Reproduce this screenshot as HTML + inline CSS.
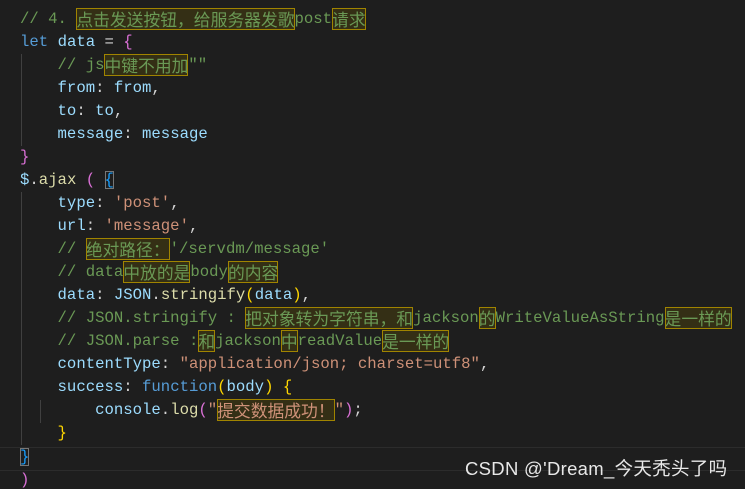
<!DOCTYPE html>
<html><head><meta charset="utf-8"><style>
html,body{margin:0;padding:0;background:#1e1e1e;width:745px;height:489px;overflow:hidden;position:relative}
.l{position:absolute;left:20px;height:23px;line-height:23px;white-space:pre;font-family:"Liberation Mono","Noto Sans CJK SC",monospace;font-size:15.65px;color:#d4d4d4}
.h{display:inline-block;vertical-align:top;height:22px;line-height:22px;font-family:"Noto Sans CJK SC",sans-serif;font-size:16.8px;outline:1px solid #a08400;outline-offset:-1px;background:rgba(110,95,0,.28)}
.cm{color:#6a9955}.k{color:#569cd6}.v{color:#9cdcfe}.s{color:#ce9178}.p{color:#da70d6}.y{color:#ffd700}.f{color:#dcdcaa}.b{color:#179fff}
.g{position:absolute;width:1px;background:#404040}
</style></head><body>
<div class="g" style="left:21px;top:54px;height:92px"></div>
<div class="g" style="left:21px;top:192px;height:253px"></div>
<div class="g" style="left:40px;top:400px;height:23px"></div>
<div style="position:absolute;left:0;top:447px;width:745px;height:22px;border-top:1px solid #2c2c2c;border-bottom:1px solid #2c2c2c"></div>

<div class="l cm" style="top:8px">// 4. <span class="h">点击发送按钮，给服务器发歌</span>post<span class="h">请求</span></div>
<div class="l" style="top:31px"><span class="k">let</span> <span class="v">data</span> = <span class="p">{</span></div>
<div class="l cm" style="top:54px">    // js<span class="h">中键不用加</span>""</div>
<div class="l" style="top:77px"><span class="v">    from</span>: <span class="v">from</span>,</div>
<div class="l" style="top:100px"><span class="v">    to</span>: <span class="v">to</span>,</div>
<div class="l" style="top:123px"><span class="v">    message</span>: <span class="v">message</span></div>
<div class="l" style="top:146px"><span class="p">}</span></div>
<div class="l" style="top:169px"><span class="v">$</span>.<span class="f">ajax</span> <span class="p">(</span> <span class="b" style="outline:1px solid #777;outline-offset:-1px">{</span></div>
<div class="l" style="top:192px"><span class="v">    type</span>: <span class="s">'post'</span>,</div>
<div class="l" style="top:215px"><span class="v">    url</span>: <span class="s">'message'</span>,</div>
<div class="l cm" style="top:238px">    // <span class="h">绝对路径：</span>'/servdm/message'</div>
<div class="l cm" style="top:261px">    // data<span class="h">中放的是</span>body<span class="h">的内容</span></div>
<div class="l" style="top:284px"><span class="v">    data</span>: <span class="v">JSON</span>.<span class="f">stringify</span><span class="y">(</span><span class="v">data</span><span class="y">)</span>,</div>
<div class="l cm" style="top:307px">    // JSON.stringify : <span class="h">把对象转为字符串，和</span>jackson<span class="h">的</span>WriteValueAsString<span class="h">是一样的</span></div>
<div class="l cm" style="top:330px">    // JSON.parse :<span class="h">和</span>jackson<span class="h">中</span>readValue<span class="h">是一样的</span></div>
<div class="l" style="top:353px"><span class="v">    contentType</span>: <span class="s">"application/json; charset=utf8"</span>,</div>
<div class="l" style="top:376px"><span class="v">    success</span>: <span class="k">function</span><span class="y">(</span><span class="v">body</span><span class="y">)</span> <span class="y">{</span></div>
<div class="l" style="top:399px">        <span class="v">console</span>.<span class="f">log</span><span class="p">(</span><span class="s">"<span class="h">提交数据成功！</span>"</span><span class="p">)</span>;</div>
<div class="l" style="top:422px">    <span class="y">}</span></div>
<div class="l" style="top:446px"><span class="b" style="outline:1px solid #777;outline-offset:-1px">}</span></div>
<div class="l" style="top:469px"><span class="p">)</span></div>
<div style="position:absolute;left:465px;top:455px;font-family:'Liberation Sans','Noto Sans CJK SC',sans-serif;font-size:18.5px;letter-spacing:0.3px;color:#e8e8e8;white-space:nowrap">CSDN @'Dream_今天秃头了吗</div>
</body></html>
